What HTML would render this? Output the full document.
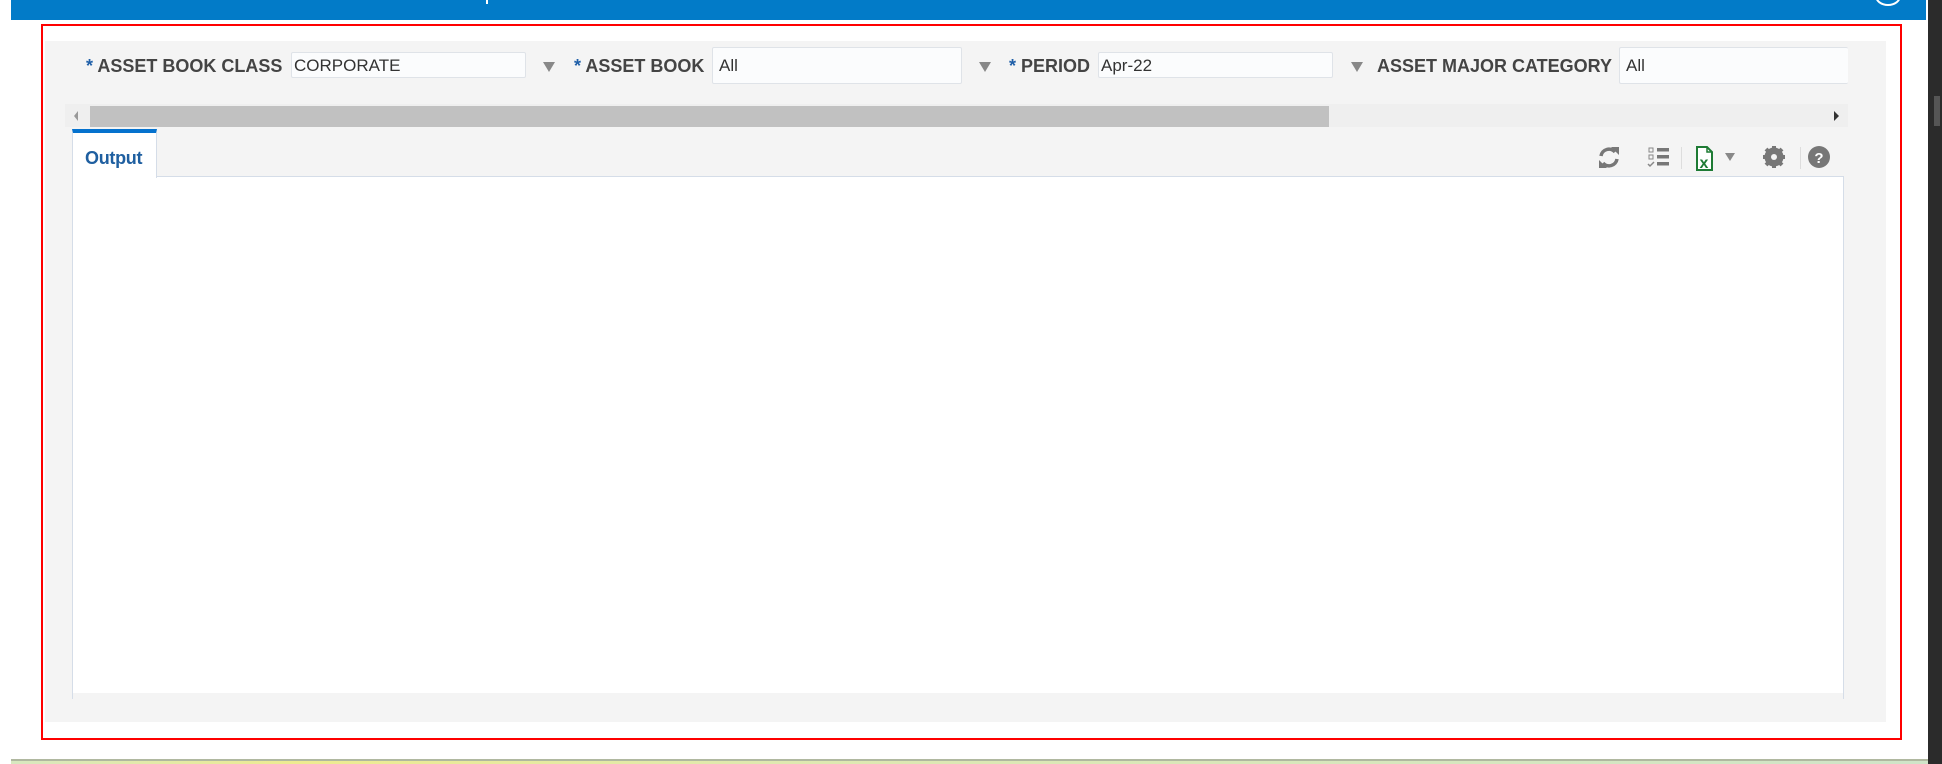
<!DOCTYPE html>
<html><head><meta charset="utf-8"><style>
*{margin:0;padding:0;box-sizing:border-box}
body{width:1942px;height:764px;background:#fff;position:relative;overflow:hidden;font-family:"Liberation Sans",Arial,sans-serif}
.a{position:absolute}
.lbl{position:absolute;font-weight:bold;font-size:18px;color:#444;top:56px;white-space:nowrap;letter-spacing:0px}
.lbl b{color:#1f5fa8;font-weight:bold}
.inp{position:absolute;background:#fbfcfd;border:1px solid #dfe3e8;font-size:17px;color:#333;padding-left:2px;border-radius:2px}
.arr{position:absolute;top:62px;width:0;height:0;border-left:6px solid transparent;border-right:6px solid transparent;border-top:10px solid #888}
</style></head><body>
<div class="a" style="left:11px;top:0;width:1915px;height:20px;background:#027bc8"></div>
<div class="a" style="left:486px;top:0;width:2px;height:4px;background:#fff"></div>
<div class="a" style="left:1875px;top:-14px;width:26px;height:20px;border:2px solid #fff;border-radius:50%"></div>
<div class="a" style="left:1928px;top:0;width:14px;height:764px;background:#2b2b2b"></div>
<div class="a" style="left:1934px;top:96px;width:6px;height:30px;background:#555"></div>
<div class="a" style="left:41px;top:24px;width:1861px;height:716px;border:2px solid #f00"></div>
<div class="a" style="left:45px;top:41px;width:1841px;height:681px;background:#f4f4f4"></div>
<div class="lbl" style="left:86px"><b>*</b> ASSET BOOK CLASS</div>
<div class="inp" style="left:291px;top:52px;width:235px;height:26px;line-height:26px">CORPORATE</div>
<div class="arr" style="left:543px"></div>
<div class="lbl" style="left:574px"><b>*</b> ASSET BOOK</div>
<div class="inp" style="left:712px;top:47px;width:250px;height:37px;line-height:36px;padding-left:6px">All</div>
<div class="arr" style="left:979px"></div>
<div class="lbl" style="left:1009px"><b>*</b> PERIOD</div>
<div class="inp" style="left:1098px;top:52px;width:235px;height:26px;line-height:26px">Apr-22</div>
<div class="arr" style="left:1351px"></div>
<div class="lbl" style="left:1377px">ASSET MAJOR CATEGORY</div>
<div class="inp" style="left:1619px;top:47px;width:229px;height:37px;line-height:36px;padding-left:6px;border-right:none">All</div>
<div class="a" style="left:65px;top:104px;width:1783px;height:23px;background:#efefef"></div>
<div class="a" style="left:90px;top:106px;width:1239px;height:21px;background:#c1c1c1"></div>
<div class="a" style="left:74px;top:111px;border-top:5px solid transparent;border-bottom:5px solid transparent;border-right:4px solid #999"></div>
<div class="a" style="left:1834px;top:111px;border-top:5px solid transparent;border-bottom:5px solid transparent;border-left:5px solid #333"></div>
<div class="a" style="left:72px;top:176px;width:1772px;height:523px;border:1px solid #d5dde8;border-bottom:none;background:#fff"></div>
<div class="a" style="left:73px;top:693px;width:1770px;height:6px;background:#f4f4f4"></div>
<div class="a" style="left:72px;top:129px;width:85px;height:49px;background:#fff;border-left:1px solid #d5dde8;border-right:1px solid #d5dde8;border-top:4px solid #0572ce"></div>
<div class="a" style="left:85px;top:148px;font-size:18px;font-weight:bold;color:#1f5fa0;letter-spacing:-0.3px">Output</div>
<svg class="a" style="left:1595px;top:143px" width="240" height="30" viewBox="0 0 240 30">
<g fill="none" stroke="#777" stroke-width="3.5"><path d="M6 13a8 8 0 0 1 14-4"/><path d="M22 16a8 8 0 0 1-14 4"/></g>
<path d="M16 4l8 0 0 8z M12 25l-8 0 0-8z" fill="#777"/>
<g fill="#777"><rect x="54" y="5" width="4" height="4" fill="none" stroke="#888"/><rect x="54" y="12" width="4" height="4" fill="none" stroke="#888"/><rect x="62" y="5" width="12" height="3.5"/><rect x="62" y="12" width="12" height="3.5"/><rect x="62" y="19" width="12" height="3.5"/></g>
<path d="M53 21l2 2 4-4" stroke="#888" fill="none" stroke-width="1.5"/>
<rect x="86" y="4" width="1" height="22" fill="#ddd"/>
<path d="M102 4h10l5 5v18h-15z" fill="#fff" stroke="#1e7b34" stroke-width="2"/>
<path d="M112 4v5h5" fill="none" stroke="#1e7b34" stroke-width="1.5"/>
<text x="104.5" y="25" font-family="Liberation Sans" font-weight="bold" font-size="16" fill="#1e7b34">x</text>
<path d="M130 10h10l-5 8z" fill="#888"/>
<circle cx="179" cy="14" r="7" fill="none" stroke="#777" stroke-width="5"/>
<g stroke="#777" stroke-width="4"><path d="M179 3v22M168 14h22M171 6l16 16M187 6l-16 16"/></g>
<circle cx="179" cy="14" r="3" fill="#f4f4f4"/>
<rect x="205" y="4" width="1" height="22" fill="#ddd"/>
<circle cx="224" cy="14" r="11" fill="#777"/>
<text x="224" y="20" text-anchor="middle" font-family="Liberation Sans" font-weight="bold" font-size="15" fill="#fff">?</text>
</svg>
<div class="a" style="left:11px;top:759px;width:1917px;height:2px;background:#b0b8a0"></div>
<div class="a" style="left:11px;top:761px;width:1917px;height:3px;background:linear-gradient(90deg,#d8e8c0,#eeeb90 15%,#dfe9b0 40%,#d0e4c8)"></div>
</body></html>
